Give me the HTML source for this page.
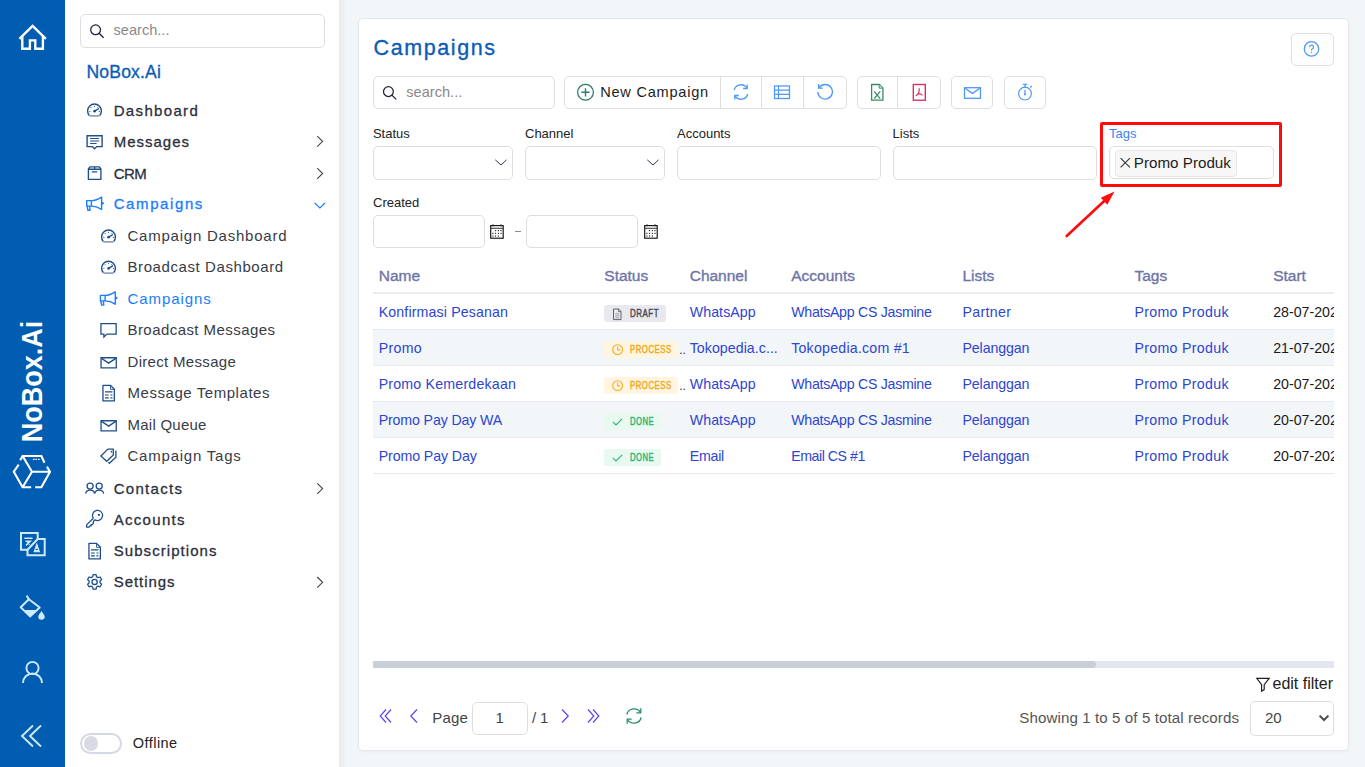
<!DOCTYPE html><html><head><meta charset="utf-8"><style>
*{margin:0;padding:0;box-sizing:border-box}
html,body{width:1365px;height:767px;overflow:hidden;background:#f3f6f9;font-family:"Liberation Sans",sans-serif}
.t{position:absolute;white-space:nowrap}
.b{position:absolute}
.s{position:absolute;overflow:visible}
</style></head><body>
<div class="b" style="left:0px;top:0px;width:65px;height:767px;background:#005db1"></div>
<svg class="s" style="left:0px;top:0px;" width="65" height="60" viewBox="0 0 65 60" fill="none"><path d="M19.4 38.8 L32.6 25.8 L45.9 38.8" stroke="#fff" stroke-width="2.35"/><path d="M22.3 35.5 V48.7 H29.9 V40.3 H35.3 V48.7 H42.9 V35.5" stroke="#fff" stroke-width="2.35"/></svg>
<div class="t" style="left:0;top:0;font-size:30px;line-height:30px;color:#fff;font-weight:700;transform:translate(31.8px,381.5px) translate(-50%,-50%) rotate(-90deg) scaleX(0.9);">NoBox.Ai</div>
<svg class="s" style="left:0px;top:440px;" width="65" height="60" viewBox="0 0 65 60" fill="none"><g stroke="#fff" stroke-width="2.1" stroke-linejoin="miter"><path d="M18.7 24.6 L13.8 31.7 L22.6 47.3 L31.2 47.3"/><path d="M35.1 47.3 L41.4 47.3 L50 31.7 L46.9 26.6"/><path d="M20.2 20.2 L22.6 16 L41.4 16 L44.5 22.7"/><path d="M22.6 16 L32 31.7 L50 31.7 M32 31.7 L22.6 47.3"/></g><path d="M33 19.3 H40" stroke="#fff" stroke-width="1.3" stroke-dasharray="1.6 0.9"/></svg>
<svg class="s" style="left:0px;top:520px;" width="65" height="45" viewBox="0 0 65 45" fill="none"><path d="M21 13 H37.7 V19 H44.7 V35.3 H27.5 V29.7 H21 Z M37.7 19 L27.5 29.7" stroke="#cfe9ff" stroke-width="2" stroke-linejoin="miter"/><path d="M24.3 18.3 H32.6 M25.5 21.3 H30.3 L26 25.4 M27.2 21.5 L29.6 24.6" stroke="#cfe9ff" stroke-width="1.5"/><path d="M33.4 32.3 L36.8 22.5 L40.2 32.3 Z" fill="#cfe9ff"/><path d="M35.6 29.4 H38" stroke="#005db1" stroke-width="1"/></svg>
<svg class="s" style="left:0px;top:590px;" width="65" height="35" viewBox="0 0 65 35" fill="none"><path d="M26.6 5.6 L28.9 9.2" stroke="#cfe9ff" stroke-width="2"/><path d="M28.9 9.3 L39.7 17.5 L30 26.4 L20.7 17.3 Z" stroke="#cfe9ff" stroke-width="2" stroke-linejoin="round"/><path d="M23.4 20 H37.1 L30 26.4 Z" fill="#cfe9ff"/><path d="M41.5 21.1 C40.3 23.3 38.3 25.1 38.3 26.6 A3.2 3.2 0 0 0 44.7 26.6 C44.7 25.1 42.7 23.3 41.5 21.1 Z" fill="#cfe9ff"/></svg>
<svg class="s" style="left:0px;top:650px;" width="65" height="40" viewBox="0 0 65 40" fill="none"><circle cx="32.5" cy="18" r="6.1" stroke="#cfe9ff" stroke-width="1.9"/><path d="M23 33 A9.5 9.5 0 0 1 42 33" stroke="#cfe9ff" stroke-width="1.9"/></svg>
<svg class="s" style="left:0px;top:715px;" width="65" height="40" viewBox="0 0 65 40" fill="none"><path d="M33 10.5 L22 21 L33 31.5 M41 10.5 L30 21 L41 31.5" stroke="#cfe9ff" stroke-width="1.9"/></svg>
<div class="b" style="left:65px;top:0px;width:274px;height:767px;background:#fff"></div>
<div class="b" style="left:339px;top:0px;width:8px;height:767px;background:linear-gradient(90deg,rgba(0,0,0,0.045),rgba(0,0,0,0))"></div>
<div class="b" style="left:80px;top:14px;width:245px;height:34px;border:1px solid #dedede;border-radius:5px;background:#fff"></div>
<svg class="s" style="left:80px;top:14px;" width="40" height="34" viewBox="0 0 40 34" fill="none"><circle cx="15.6" cy="15.8" r="4.9" stroke="#1c2038" stroke-width="1.25"/><path d="M19.1 19.3 L23.6 23.8" stroke="#1c2038" stroke-width="1.3"/></svg>
<div class="t" style="left:113.5px;top:22.70px;font-size:14.6px;line-height:14.6px;color:#8a8a8a;font-weight:400;letter-spacing:0px;">search...</div>
<div class="t" style="left:86.5px;top:64.20px;font-size:17.6px;line-height:17.6px;color:#0b5cb5;font-weight:400;letter-spacing:0.15px;-webkit-text-stroke:0.3px #0b5cb5">NoBox.Ai</div>
<div class="t" style="left:113.7px;top:102.50px;font-size:15px;line-height:15px;color:#2c2f3d;font-weight:400;letter-spacing:1.34px;-webkit-text-stroke:0.3px #2c2f3d">Dashboard</div>
<div class="t" style="left:113.7px;top:133.50px;font-size:15px;line-height:15px;color:#2c2f3d;font-weight:400;letter-spacing:0.99px;-webkit-text-stroke:0.3px #2c2f3d">Messages</div>
<div class="t" style="left:113.7px;top:165.50px;font-size:15px;line-height:15px;color:#2c2f3d;font-weight:400;letter-spacing:-0.5px;-webkit-text-stroke:0.3px #2c2f3d">CRM</div>
<div class="t" style="left:113.7px;top:196.10px;font-size:15px;line-height:15px;color:#1a7cff;font-weight:400;letter-spacing:1.6px;-webkit-text-stroke:0.3px #1a7cff">Campaigns</div>
<div class="t" style="left:127.5px;top:228.00px;font-size:15px;line-height:15px;color:#383b48;font-weight:400;letter-spacing:0.769px;">Campaign Dashboard</div>
<div class="t" style="left:127.5px;top:259.00px;font-size:15px;line-height:15px;color:#383b48;font-weight:400;letter-spacing:0.584px;">Broadcast Dashboard</div>
<div class="t" style="left:127.5px;top:290.50px;font-size:15px;line-height:15px;color:#1a7cff;font-weight:400;letter-spacing:0.929px;">Campaigns</div>
<div class="t" style="left:127.5px;top:321.50px;font-size:15px;line-height:15px;color:#383b48;font-weight:400;letter-spacing:0.437px;">Broadcast Messages</div>
<div class="t" style="left:127.5px;top:354.00px;font-size:15px;line-height:15px;color:#383b48;font-weight:400;letter-spacing:0.315px;">Direct Message</div>
<div class="t" style="left:127.5px;top:385.00px;font-size:15px;line-height:15px;color:#383b48;font-weight:400;letter-spacing:0.555px;">Message Templates</div>
<div class="t" style="left:127.5px;top:417.00px;font-size:15px;line-height:15px;color:#383b48;font-weight:400;letter-spacing:0.243px;">Mail Queue</div>
<div class="t" style="left:127.5px;top:447.50px;font-size:15px;line-height:15px;color:#383b48;font-weight:400;letter-spacing:0.779px;">Campaign Tags</div>
<div class="t" style="left:113.7px;top:480.50px;font-size:15px;line-height:15px;color:#2c2f3d;font-weight:400;letter-spacing:1.301px;-webkit-text-stroke:0.3px #2c2f3d">Contacts</div>
<div class="t" style="left:113.7px;top:511.60px;font-size:15px;line-height:15px;color:#2c2f3d;font-weight:400;letter-spacing:1.301px;-webkit-text-stroke:0.3px #2c2f3d">Accounts</div>
<div class="t" style="left:113.7px;top:543.40px;font-size:15px;line-height:15px;color:#2c2f3d;font-weight:400;letter-spacing:1.063px;-webkit-text-stroke:0.3px #2c2f3d">Subscriptions</div>
<div class="t" style="left:113.7px;top:574.30px;font-size:15px;line-height:15px;color:#2c2f3d;font-weight:400;letter-spacing:0.944px;-webkit-text-stroke:0.3px #2c2f3d">Settings</div>
<svg class="s" style="left:0;top:0" width="1365" height="767" viewBox="0 0 1365 767" fill="none"><g transform="translate(0 0)"><path d="M89.4 115.6 A6.9 6.9 0 1 1 99.6 115.6" stroke="#1f4f8a" stroke-width="1.4"/><path d="M89.6 115.9 H99.4" stroke="#6f80a0" stroke-width="1.3"/><path d="M94.6 111.2 L99 108.5" stroke="#1f4f8a" stroke-width="1.4"/><circle cx="94.6" cy="111.2" r="1.35" fill="#1f4f8a"/><g fill="#1f4f8a"><circle cx="89.9" cy="111.3" r="0.6"/><circle cx="99.4" cy="111.3" r="0.6"/><circle cx="94.5" cy="106.3" r="0.6"/><circle cx="91.1" cy="107.6" r="0.55"/><circle cx="97.9" cy="107.2" r="0.5"/></g></g><g transform="translate(14 126)"><path d="M89.4 115.6 A6.9 6.9 0 1 1 99.6 115.6" stroke="#1f4f8a" stroke-width="1.4"/><path d="M89.6 115.9 H99.4" stroke="#6f80a0" stroke-width="1.3"/><path d="M94.6 111.2 L99 108.5" stroke="#1f4f8a" stroke-width="1.4"/><circle cx="94.6" cy="111.2" r="1.35" fill="#1f4f8a"/><g fill="#1f4f8a"><circle cx="89.9" cy="111.3" r="0.6"/><circle cx="99.4" cy="111.3" r="0.6"/><circle cx="94.5" cy="106.3" r="0.6"/><circle cx="91.1" cy="107.6" r="0.55"/><circle cx="97.9" cy="107.2" r="0.5"/></g></g><g transform="translate(14 157.2)"><path d="M89.4 115.6 A6.9 6.9 0 1 1 99.6 115.6" stroke="#1f4f8a" stroke-width="1.4"/><path d="M89.6 115.9 H99.4" stroke="#6f80a0" stroke-width="1.3"/><path d="M94.6 111.2 L99 108.5" stroke="#1f4f8a" stroke-width="1.4"/><circle cx="94.6" cy="111.2" r="1.35" fill="#1f4f8a"/><g fill="#1f4f8a"><circle cx="89.9" cy="111.3" r="0.6"/><circle cx="99.4" cy="111.3" r="0.6"/><circle cx="94.5" cy="106.3" r="0.6"/><circle cx="91.1" cy="107.6" r="0.55"/><circle cx="97.9" cy="107.2" r="0.5"/></g></g><g stroke="#1f4f8a"><path d="M87.1 135.7 H102.1 V146.6 H96.7 L94.5 148.8 L92.3 146.6 H87.1 Z" stroke-width="1.4"/><path d="M90.1 138.5 H99.1 M90.1 141 H99.1 M90.1 143.5 H96.6" stroke-width="1.2"/></g><g stroke="#1f4f8a" stroke-width="1.35" stroke-linejoin="round"><path d="M88.4 179.4 V169 L89.9 166.9 H99.3 L100.9 169 V179.4 Z"/><path d="M88.4 169.2 H100.9 M94.6 166.9 V169.2 M91.8 171.8 H97.2"/></g><g transform="translate(0 0)" stroke="#1a7cff" stroke-width="1.4" stroke-linejoin="round"><path d="M86.7 200.6 H91.4 V206.1 H86.7 Z"/><path d="M91.4 200.6 C94.6 200.6 98 199.4 101.6 197.1 V209.4 C98 207.1 94.6 206.1 91.4 206.1"/><path d="M87.1 206.2 L87.9 210.3 H90.1 L89.6 206.2"/><circle cx="102.6" cy="203.25" r="1.2" fill="#1a7cff" stroke="none"/></g><g transform="translate(13.7 94.8)" stroke="#1a7cff" stroke-width="1.4" stroke-linejoin="round"><path d="M86.7 200.6 H91.4 V206.1 H86.7 Z"/><path d="M91.4 200.6 C94.6 200.6 98 199.4 101.6 197.1 V209.4 C98 207.1 94.6 206.1 91.4 206.1"/><path d="M87.1 206.2 L87.9 210.3 H90.1 L89.6 206.2"/><circle cx="102.6" cy="203.25" r="1.2" fill="#1a7cff" stroke="none"/></g><path d="M100.95 323.65 H116.15 V334.05 H107 L103.9 337 V334.05 H100.95 Z" stroke="#1f4f8a" stroke-width="1.3" stroke-linejoin="miter"/><g transform="translate(0 0)" stroke="#1f4f8a" stroke-width="1.3"><path d="M101.05 357.75 H116.25 V367.85 H101.05 Z"/><path d="M101.2 358.1 L108.65 363.1 L116.1 358.1"/></g><g transform="translate(0 0)" stroke="#1f4f8a"><path d="M102.95 385.35 H110.6 L114.35 389.2 V400.95 H102.95 Z" stroke-width="1.3" stroke-linejoin="round"/><path d="M110.5 385.6 V389.3 H114.2" stroke-width="0.9"/><path d="M105 391.9 H112.5 M105 395 H108.8 M110.4 395 H112.5 M105 397.9 H108.8 M110.4 397.9 H112.5" stroke-width="1.1"/></g><g transform="translate(0 63)" stroke="#1f4f8a" stroke-width="1.3"><path d="M101.05 357.75 H116.25 V367.85 H101.05 Z"/><path d="M101.2 358.1 L108.65 363.1 L116.1 358.1"/></g><g stroke="#1f4f8a" stroke-width="1.3" stroke-linejoin="miter"><path d="M100.9 456 L107.9 449.1 H113.3 V455 L106.7 461.3 Z"/><path d="M115.9 450.6 V457.2 L109.4 463.3 L108.4 462.3"/></g><circle cx="111.4" cy="451.7" r="0.85" fill="#1f4f8a"/><g stroke="#1f4f8a" stroke-width="1.3"><circle cx="90.1" cy="486.1" r="3.05"/><circle cx="99.2" cy="486.1" r="3.05"/><path d="M85.6 493.6 A4.6 4.3 0 0 1 94.65 493.6 A4.6 4.3 0 0 1 103.7 493.6"/></g><g stroke="#1f4f8a" stroke-width="1.3" stroke-linejoin="round"><path d="M93.3 518.3 A5.1 5.1 0 1 1 94.7 519.7"/><path d="M93.3 518.3 L86.6 524.9 V527.1 H89.1 L89.9 525.9 H91.1 V524.7 H92.3 L93.3 523.4 V521.9 L94.7 519.7"/></g><circle cx="98.9" cy="514.9" r="1.1" fill="#1f4f8a"/><g transform="translate(-14 158)" stroke="#1f4f8a"><path d="M102.95 385.35 H110.6 L114.35 389.2 V400.95 H102.95 Z" stroke-width="1.3" stroke-linejoin="round"/><path d="M110.5 385.6 V389.3 H114.2" stroke-width="0.9"/><path d="M105 391.9 H112.5 M105 395 H108.8 M110.4 395 H112.5 M105 397.9 H108.8 M110.4 397.9 H112.5" stroke-width="1.1"/></g><g stroke="#1f4f8a" stroke-width="1.3" stroke-linejoin="round"><path d="M92.66 576.75 L93.13 574.65 L96.07 574.65 L96.54 576.75 L98.09 577.65 L100.15 577.00 L101.62 579.55 L100.03 581.00 L100.03 582.80 L101.62 584.25 L100.15 586.80 L98.09 586.15 L96.54 587.05 L96.07 589.15 L93.13 589.15 L92.66 587.05 L91.11 586.15 L89.05 586.80 L87.58 584.25 L89.17 582.80 L89.17 581.00 L87.58 579.55 L89.05 577.00 L91.11 577.65 Z"/><circle cx="94.6" cy="581.9" r="2.6"/></g><path d="M317.2 136.05 L322.6 141.35 L317.2 146.65" stroke="#444" stroke-width="1.1"/><path d="M317.2 168.20 L322.6 173.50 L317.2 178.80" stroke="#444" stroke-width="1.1"/><path d="M317.2 483.30 L322.6 488.60 L317.2 493.90" stroke="#444" stroke-width="1.1"/><path d="M317.2 577.00 L322.6 582.30 L317.2 587.60" stroke="#444" stroke-width="1.1"/><path d="M314.8 203 L319.9 208 L325 203" stroke="#1a7cff" stroke-width="1.1"/></svg>
<div class="b" style="left:80px;top:733px;width:42px;height:21px;border:2px solid #d5d9e3;border-radius:10.5px;background:#fff"></div>
<div class="b" style="left:83.5px;top:736.3px;width:14.5px;height:14.5px;border-radius:50%;background:#d8dbe4"></div>
<div class="t" style="left:132.8px;top:735.75px;font-size:14.5px;line-height:14.5px;color:#222;font-weight:400;letter-spacing:0.45px;">Offline</div>
<div class="b" style="left:358px;top:18px;width:991px;height:733px;background:#fff;border:1px solid #e4e7eb;border-radius:5px;box-shadow:0 1px 3px rgba(0,0,0,0.04)"></div>
<div class="t" style="left:373.5px;top:38.25px;font-size:21.5px;line-height:21.5px;color:#0b5cb5;font-weight:400;letter-spacing:1.6px;-webkit-text-stroke:0.35px #0b5cb5">Campaigns</div>
<div class="b" style="left:1291px;top:33px;width:43px;height:33px;border:1px solid #e0e0e0;border-radius:5px"></div>
<svg class="s" style="left:1301px;top:39px;" width="21" height="21" viewBox="0 0 21 21" fill="none"><circle cx="10.5" cy="9.9" r="7.2" stroke="#5097fa" stroke-width="1.25"/><path d="M8.7 8.2 A1.9 1.9 0 1 1 11.1 9.9 C10.6 10.2 10.5 10.6 10.5 11.4" stroke="#5097fa" stroke-width="1.2"/><circle cx="10.5" cy="13.3" r="0.8" fill="#5097fa"/></svg>
<div class="b" style="left:373px;top:76px;width:182px;height:33px;border:1px solid #dedede;border-radius:5px"></div>
<svg class="s" style="left:373px;top:76px;" width="40" height="33" viewBox="0 0 40 33" fill="none"><circle cx="15.4" cy="15.6" r="4.9" stroke="#1c2038" stroke-width="1.25"/><path d="M18.9 19.1 L23.2 23.4" stroke="#1c2038" stroke-width="1.3"/></svg>
<div class="t" style="left:406.3px;top:84.90px;font-size:14.6px;line-height:14.6px;color:#8a8a8a;font-weight:400;letter-spacing:0px;">search...</div>
<div class="b" style="left:564px;top:76px;width:283px;height:33px;border:1px solid #dedede;border-radius:5px"></div>
<div class="b" style="left:719.5px;top:77px;width:1px;height:31px;background:#dedede"></div>
<div class="b" style="left:761px;top:77px;width:1px;height:31px;background:#dedede"></div>
<div class="b" style="left:803px;top:77px;width:1px;height:31px;background:#dedede"></div>
<svg class="s" style="left:574px;top:82px;" width="22" height="22" viewBox="0 0 22 22" fill="none"><circle cx="11.5" cy="10.3" r="7.9" stroke="#2a7d68" stroke-width="1.25"/><path d="M11.5 6.2 V14.4 M7.4 10.3 H15.6" stroke="#2a7d68" stroke-width="1.4"/></svg>
<div class="t" style="left:600.2px;top:84.70px;font-size:14.6px;line-height:14.6px;color:#1d1d1d;font-weight:400;letter-spacing:0.75px;">New Campaign</div>
<svg class="s" style="left:730px;top:81px;" width="22" height="22" viewBox="0 0 22 22" fill="none"><path d="M4.2 9 A7 7 0 0 1 17 7.2 M17.8 13 A7 7 0 0 1 5 14.8" stroke="#5097fa" stroke-width="1.3"/><path d="M17.2 3.5 V7.5 H13.2 M4.8 18.5 V14.5 H8.8" stroke="#5097fa" stroke-width="1.3"/></svg>
<svg class="s" style="left:771px;top:81px;" width="22" height="22" viewBox="0 0 22 22" fill="none"><rect x="3.5" y="5" width="15" height="12.5" stroke="#5097fa" stroke-width="1.3"/><path d="M3.5 9.2 H18.5 M3.5 13.3 H18.5 M7.5 5 V17.5" stroke="#5097fa" stroke-width="1.25"/></svg>
<svg class="s" style="left:814px;top:81px;" width="22" height="22" viewBox="0 0 22 22" fill="none"><path d="M5.2 6.5 A7.3 7.3 0 1 1 3.8 11" stroke="#5097fa" stroke-width="1.3"/><path d="M4.6 3 V7.2 H8.8" stroke="#5097fa" stroke-width="1.3"/></svg>
<div class="b" style="left:856.5px;top:76px;width:84px;height:33px;border:1px solid #dedede;border-radius:5px"></div>
<div class="b" style="left:897px;top:77px;width:1px;height:31px;background:#dedede"></div>
<svg class="s" style="left:866px;top:81px;" width="22" height="22" viewBox="0 0 22 22" fill="none"><path d="M5.6 3.5 H13.4 L16.9 7 V19.2 H5.6 Z" stroke="#3a8a66" stroke-width="1.3" stroke-linejoin="round"/><path d="M13.2 3.6 V7.2 H16.8" stroke="#3a8a66" stroke-width="0.9" fill="#cfe6da"/><path d="M8.2 10.3 L14.2 17.6 M14.2 10.3 L8.2 17.6" stroke="#3a8a66" stroke-width="1.3"/></svg>
<svg class="s" style="left:908px;top:81px;" width="22" height="22" viewBox="0 0 22 22" fill="none"><rect x="5.3" y="3.5" width="12" height="15.7" stroke="#dc2a5e" stroke-width="1.35"/><path d="M11.3 7.3 C11.3 9.5 11 11 10.4 12.3 C9.6 13.6 8.6 14.3 7.8 14.8 M11.2 12.4 C12.3 13.3 13.4 13.8 14.6 14.2 M9.6 13.2 C10.8 12.8 12.2 12.8 13.6 13.4" stroke="#dc2a5e" stroke-width="1.2"/></svg>
<div class="b" style="left:951px;top:76px;width:42px;height:33px;border:1px solid #dedede;border-radius:5px"></div>
<svg class="s" style="left:961px;top:81px;" width="22" height="22" viewBox="0 0 22 22" fill="none"><rect x="3.5" y="6.7" width="16" height="10.6" stroke="#5097fa" stroke-width="1.3"/><path d="M3.8 7 L11.5 12.4 L19.2 7" stroke="#5097fa" stroke-width="1.3"/></svg>
<div class="b" style="left:1004px;top:76px;width:42px;height:33px;border:1px solid #dedede;border-radius:5px"></div>
<svg class="s" style="left:1014px;top:81px;" width="22" height="22" viewBox="0 0 22 22" fill="none"><circle cx="11" cy="12.6" r="6.4" stroke="#5097fa" stroke-width="1.2"/><path d="M8.8 3.3 H13.2 M11 3.3 V6.2 M16.2 6.6 L17.8 5" stroke="#5097fa" stroke-width="1.3"/><path d="M11 9 V13.6" stroke="#5097fa" stroke-width="1.3"/><path d="M9.6 12.6 L11 15 L12.4 12.6 Z" fill="#5097fa"/></svg>
<div class="t" style="left:372.9px;top:127.40px;font-size:13px;line-height:13px;color:#222;font-weight:400;letter-spacing:0px;">Status</div>
<div class="t" style="left:525px;top:127.40px;font-size:13px;line-height:13px;color:#222;font-weight:400;letter-spacing:0px;">Channel</div>
<div class="t" style="left:677px;top:127.40px;font-size:13px;line-height:13px;color:#222;font-weight:400;letter-spacing:0px;">Accounts</div>
<div class="t" style="left:892.6px;top:127.40px;font-size:13px;line-height:13px;color:#222;font-weight:400;letter-spacing:0px;">Lists</div>
<div class="t" style="left:1109px;top:127.40px;font-size:13px;line-height:13px;color:#3b82f6;font-weight:400;letter-spacing:0px;">Tags</div>
<div class="b" style="left:373px;top:146px;width:140px;height:34px;border:1px solid #dedede;border-radius:5px;background:#fff"></div>
<div class="b" style="left:525px;top:146px;width:140px;height:34px;border:1px solid #dedede;border-radius:5px;background:#fff"></div>
<svg class="s" style="left:490px;top:153px;" width="20" height="20" viewBox="0 0 20 20" fill="none"><path d="M5.3 6.9 L11 11.9 L16.5 6.9" stroke="#2c3150" stroke-width="1.0"/></svg>
<svg class="s" style="left:642px;top:153px;" width="20" height="20" viewBox="0 0 20 20" fill="none"><path d="M5.3 6.9 L11 11.9 L16.5 6.9" stroke="#2c3150" stroke-width="1.0"/></svg>
<div class="b" style="left:677px;top:146px;width:204px;height:34px;border:1px solid #dedede;border-radius:5px;background:#fff"></div>
<div class="b" style="left:892.5px;top:146px;width:204px;height:34px;border:1px solid #dedede;border-radius:5px;background:#fff"></div>
<div class="b" style="left:1109px;top:146px;width:164.5px;height:33px;border:1px solid #dedede;border-radius:5px;background:#fff"></div>
<div class="b" style="left:1115px;top:149.5px;width:121.5px;height:27px;background:#f7f7f7;border:1px solid #e6e6e6;border-radius:4px"></div>
<svg class="s" style="left:1117px;top:153px;" width="16" height="20" viewBox="0 0 16 20" fill="none"><path d="M3.6 5.1 L12.9 14.4 M12.9 5.1 L3.6 14.4" stroke="#333" stroke-width="1.05"/></svg>
<div class="t" style="left:1133.8px;top:155.30px;font-size:15.2px;line-height:15.2px;color:#1d1d1d;font-weight:400;letter-spacing:0px;">Promo Produk</div>
<div class="b" style="left:1100px;top:122px;width:182px;height:65px;border:3px solid #ff0b0b;border-radius:2px"></div>
<svg class="s" style="left:1060px;top:185px;" width="60" height="55" viewBox="0 0 60 55" fill="none"><path d="M6.7 51 L45 15.3" stroke="#ff0b0b" stroke-width="2.6" stroke-linecap="round"/><path d="M54.5 6.5 L47.3 19.8 L40.8 12.7 Z" fill="#ff0b0b"/></svg>
<div class="t" style="left:373px;top:196.40px;font-size:13px;line-height:13px;color:#222;font-weight:400;letter-spacing:0px;">Created</div>
<div class="b" style="left:373px;top:215px;width:112px;height:33px;border:1px solid #dedede;border-radius:5px;background:#fff"></div>
<div class="b" style="left:526.4px;top:215px;width:112px;height:33px;border:1px solid #dedede;border-radius:5px;background:#fff"></div>
<svg class="s" style="left:486px;top:220px;" width="22" height="22" viewBox="0 0 22 22" fill="none"><rect x="4.7" y="5.6" width="12.5" height="12.6" stroke="#111" stroke-width="1.15"/><path d="M4.7 8.3 H17.2" stroke="#444" stroke-width="1.1"/><path d="M7 4.2 V6.4 M15 4.2 V6.4" stroke="#333" stroke-width="1"/><rect x="8.9" y="10.0" width="1.2" height="1.2" fill="#333"/><rect x="11.8" y="10.0" width="1.2" height="1.2" fill="#333"/><rect x="14.4" y="10.0" width="1.2" height="1.2" fill="#333"/><rect x="6.3" y="12.8" width="1.2" height="1.2" fill="#333"/><rect x="8.9" y="12.8" width="1.2" height="1.2" fill="#333"/><rect x="11.8" y="12.8" width="1.2" height="1.2" fill="#333"/><rect x="14.4" y="12.8" width="1.2" height="1.2" fill="#333"/><rect x="6.3" y="15.4" width="1.2" height="1.2" fill="#333"/><rect x="8.9" y="15.4" width="1.2" height="1.2" fill="#333"/><rect x="11.8" y="15.4" width="1.2" height="1.2" fill="#333"/></svg>
<svg class="s" style="left:640px;top:220px;" width="22" height="22" viewBox="0 0 22 22" fill="none"><rect x="4.7" y="5.6" width="12.5" height="12.6" stroke="#111" stroke-width="1.15"/><path d="M4.7 8.3 H17.2" stroke="#444" stroke-width="1.1"/><path d="M7 4.2 V6.4 M15 4.2 V6.4" stroke="#333" stroke-width="1"/><rect x="8.9" y="10.0" width="1.2" height="1.2" fill="#333"/><rect x="11.8" y="10.0" width="1.2" height="1.2" fill="#333"/><rect x="14.4" y="10.0" width="1.2" height="1.2" fill="#333"/><rect x="6.3" y="12.8" width="1.2" height="1.2" fill="#333"/><rect x="8.9" y="12.8" width="1.2" height="1.2" fill="#333"/><rect x="11.8" y="12.8" width="1.2" height="1.2" fill="#333"/><rect x="14.4" y="12.8" width="1.2" height="1.2" fill="#333"/><rect x="6.3" y="15.4" width="1.2" height="1.2" fill="#333"/><rect x="8.9" y="15.4" width="1.2" height="1.2" fill="#333"/><rect x="11.8" y="15.4" width="1.2" height="1.2" fill="#333"/></svg>
<div class="b" style="left:515px;top:231.3px;width:5.5px;height:1.2px;background:#8a8a8a"></div>
<div class="t" style="left:378.7px;top:267.75px;font-size:15.5px;line-height:15.5px;color:#6d75a6;font-weight:400;letter-spacing:0px;-webkit-text-stroke:0.35px #6d75a6">Name</div>
<div class="t" style="left:604.3px;top:267.75px;font-size:15.5px;line-height:15.5px;color:#6d75a6;font-weight:400;letter-spacing:0px;-webkit-text-stroke:0.35px #6d75a6">Status</div>
<div class="t" style="left:689.7px;top:267.75px;font-size:15.5px;line-height:15.5px;color:#6d75a6;font-weight:400;letter-spacing:0px;-webkit-text-stroke:0.35px #6d75a6">Channel</div>
<div class="t" style="left:791.2px;top:267.75px;font-size:15.5px;line-height:15.5px;color:#6d75a6;font-weight:400;letter-spacing:0px;-webkit-text-stroke:0.35px #6d75a6">Accounts</div>
<div class="t" style="left:962.5px;top:267.75px;font-size:15.5px;line-height:15.5px;color:#6d75a6;font-weight:400;letter-spacing:0px;-webkit-text-stroke:0.35px #6d75a6">Lists</div>
<div class="t" style="left:1134.5px;top:267.75px;font-size:15.5px;line-height:15.5px;color:#6d75a6;font-weight:400;letter-spacing:0px;-webkit-text-stroke:0.35px #6d75a6">Tags</div>
<div class="t" style="left:1273.2px;top:267.75px;font-size:15.5px;line-height:15.5px;color:#6d75a6;font-weight:400;letter-spacing:0px;-webkit-text-stroke:0.35px #6d75a6">Start</div>
<div class="b" style="left:373px;top:292px;width:961px;height:2px;background:#e9ecf0"></div>
<div class="b" style="left:373px;top:294px;width:961px;height:180px;overflow:hidden">
<div class="b" style="left:0;top:0px;width:961px;height:36px;background:#fff;border-bottom:1px solid #e6e9ee"></div>
<div class="t" style="left:5.699999999999989px;top:10.90px;font-size:14.2px;line-height:14.2px;color:#2d45d0;font-weight:400;letter-spacing:0.137px;">Konfirmasi Pesanan</div>
<div class="t" style="left:316.70000000000005px;top:10.90px;font-size:14.2px;line-height:14.2px;color:#2d45d0;font-weight:400;letter-spacing:0.085px;">WhatsApp</div>
<div class="t" style="left:418.20000000000005px;top:10.90px;font-size:14.2px;line-height:14.2px;color:#2d45d0;font-weight:400;letter-spacing:-0.289px;">WhatsApp CS Jasmine</div>
<div class="t" style="left:589.5px;top:10.90px;font-size:14.2px;line-height:14.2px;color:#2d45d0;font-weight:400;letter-spacing:0.323px;">Partner</div>
<div class="t" style="left:761.5px;top:10.90px;font-size:14.2px;line-height:14.2px;color:#2d45d0;font-weight:400;letter-spacing:0.3px;">Promo Produk</div>
<div class="t" style="left:900.2px;top:10.90px;font-size:14.2px;line-height:14.2px;color:#1a1a1a;font-weight:400;letter-spacing:0px;">28-07-202</div>
<div class="b" style="left:231.20000000000005px;top:11px;width:61.5px;height:17px;background:#e8e9ee;border-radius:3px"></div>
<svg class="s" style="left:239.20000000000005px;top:13.5px;" width="12" height="13" viewBox="0 0 12 13" fill="none"><path d="M1.5 1 H6.6 L9 3.4 V11.6 H1.5 Z" stroke="#505060" stroke-width="0.9" stroke-linejoin="round"/><path d="M6.4 1 V3.6 H9" stroke="#505060" stroke-width="0.7"/><path d="M3.3 5.8 H7.2 M3.3 7.8 H7.2 M3.3 9.8 H7.2" stroke="#6a6a78" stroke-width="0.6"/></svg>
<div class="t" style="left:256.90000000000003px;top:14.00px;font-size:10.6px;line-height:10.6px;color:#4b4b58;font-weight:400;letter-spacing:0.7px;transform:scaleX(0.75);transform-origin:0 0;-webkit-text-stroke:0.45px #4b4b58">DRAFT</div>
<div class="b" style="left:0;top:36px;width:961px;height:36px;background:#f3f6f9;border-bottom:1px solid #e6e9ee"></div>
<div class="t" style="left:5.699999999999989px;top:46.90px;font-size:14.2px;line-height:14.2px;color:#2d45d0;font-weight:400;letter-spacing:0.32px;">Promo</div>
<div class="t" style="left:316.70000000000005px;top:46.90px;font-size:14.2px;line-height:14.2px;color:#2d45d0;font-weight:400;letter-spacing:0.045px;">Tokopedia.c...</div>
<div class="t" style="left:418.20000000000005px;top:46.90px;font-size:14.2px;line-height:14.2px;color:#2d45d0;font-weight:400;letter-spacing:0.224px;">Tokopedia.com #1</div>
<div class="t" style="left:589.5px;top:46.90px;font-size:14.2px;line-height:14.2px;color:#2d45d0;font-weight:400;letter-spacing:-0.126px;">Pelanggan</div>
<div class="t" style="left:761.5px;top:46.90px;font-size:14.2px;line-height:14.2px;color:#2d45d0;font-weight:400;letter-spacing:0.3px;">Promo Produk</div>
<div class="t" style="left:900.2px;top:46.90px;font-size:14.2px;line-height:14.2px;color:#1a1a1a;font-weight:400;letter-spacing:0px;">21-07-202</div>
<div class="b" style="left:231.20000000000005px;top:47px;width:73.5px;height:17px;background:#fff5e1;border-radius:3px"></div>
<svg class="s" style="left:238.20000000000005px;top:49px;" width="13" height="13" viewBox="0 0 13 13" fill="none"><circle cx="6.6" cy="6.6" r="4.9" stroke="#f3ac22" stroke-width="1.1"/><path d="M6.6 3.4 V6.9 H9.2" stroke="#f3ac22" stroke-width="1.1"/></svg>
<div class="t" style="left:256.90000000000003px;top:50.00px;font-size:10.6px;line-height:10.6px;color:#f0a81c;font-weight:400;letter-spacing:0.7px;transform:scaleX(0.735);transform-origin:0 0;-webkit-text-stroke:0.45px #f0a81c">PROCESS</div>
<div class="t" style="left:306.20000000000005px;top:49.50px;font-size:12px;line-height:12px;color:#333;font-weight:400;letter-spacing:0px;">..</div>
<div class="b" style="left:0;top:72px;width:961px;height:36px;background:#fff;border-bottom:1px solid #e6e9ee"></div>
<div class="t" style="left:5.699999999999989px;top:82.90px;font-size:14.2px;line-height:14.2px;color:#2d45d0;font-weight:400;letter-spacing:0.195px;">Promo Kemerdekaan</div>
<div class="t" style="left:316.70000000000005px;top:82.90px;font-size:14.2px;line-height:14.2px;color:#2d45d0;font-weight:400;letter-spacing:0.085px;">WhatsApp</div>
<div class="t" style="left:418.20000000000005px;top:82.90px;font-size:14.2px;line-height:14.2px;color:#2d45d0;font-weight:400;letter-spacing:-0.289px;">WhatsApp CS Jasmine</div>
<div class="t" style="left:589.5px;top:82.90px;font-size:14.2px;line-height:14.2px;color:#2d45d0;font-weight:400;letter-spacing:-0.126px;">Pelanggan</div>
<div class="t" style="left:761.5px;top:82.90px;font-size:14.2px;line-height:14.2px;color:#2d45d0;font-weight:400;letter-spacing:0.3px;">Promo Produk</div>
<div class="t" style="left:900.2px;top:82.90px;font-size:14.2px;line-height:14.2px;color:#1a1a1a;font-weight:400;letter-spacing:0px;">20-07-202</div>
<div class="b" style="left:231.20000000000005px;top:83px;width:73.5px;height:17px;background:#fff5e1;border-radius:3px"></div>
<svg class="s" style="left:238.20000000000005px;top:85px;" width="13" height="13" viewBox="0 0 13 13" fill="none"><circle cx="6.6" cy="6.6" r="4.9" stroke="#f3ac22" stroke-width="1.1"/><path d="M6.6 3.4 V6.9 H9.2" stroke="#f3ac22" stroke-width="1.1"/></svg>
<div class="t" style="left:256.90000000000003px;top:86.00px;font-size:10.6px;line-height:10.6px;color:#f0a81c;font-weight:400;letter-spacing:0.7px;transform:scaleX(0.735);transform-origin:0 0;-webkit-text-stroke:0.45px #f0a81c">PROCESS</div>
<div class="t" style="left:306.20000000000005px;top:85.50px;font-size:12px;line-height:12px;color:#333;font-weight:400;letter-spacing:0px;">..</div>
<div class="b" style="left:0;top:108px;width:961px;height:36px;background:#f3f6f9;border-bottom:1px solid #e6e9ee"></div>
<div class="t" style="left:5.699999999999989px;top:118.90px;font-size:14.2px;line-height:14.2px;color:#2d45d0;font-weight:400;letter-spacing:-0.135px;">Promo Pay Day WA</div>
<div class="t" style="left:316.70000000000005px;top:118.90px;font-size:14.2px;line-height:14.2px;color:#2d45d0;font-weight:400;letter-spacing:0.085px;">WhatsApp</div>
<div class="t" style="left:418.20000000000005px;top:118.90px;font-size:14.2px;line-height:14.2px;color:#2d45d0;font-weight:400;letter-spacing:-0.289px;">WhatsApp CS Jasmine</div>
<div class="t" style="left:589.5px;top:118.90px;font-size:14.2px;line-height:14.2px;color:#2d45d0;font-weight:400;letter-spacing:-0.126px;">Pelanggan</div>
<div class="t" style="left:761.5px;top:118.90px;font-size:14.2px;line-height:14.2px;color:#2d45d0;font-weight:400;letter-spacing:0.3px;">Promo Produk</div>
<div class="t" style="left:900.2px;top:118.90px;font-size:14.2px;line-height:14.2px;color:#1a1a1a;font-weight:400;letter-spacing:0px;">20-07-202</div>
<div class="b" style="left:231.20000000000005px;top:119px;width:56.5px;height:17px;background:#e8f9f0;border-radius:3px"></div>
<svg class="s" style="left:238.20000000000005px;top:121px;" width="13" height="13" viewBox="0 0 13 13" fill="none"><path d="M1.8 6.8 L5 10 L11.2 3.8" stroke="#2cb57a" stroke-width="1.1"/></svg>
<div class="t" style="left:256.90000000000003px;top:122.00px;font-size:10.6px;line-height:10.6px;color:#2cb57a;font-weight:400;letter-spacing:0.7px;transform:scaleX(0.72);transform-origin:0 0;-webkit-text-stroke:0.45px #2cb57a">DONE</div>
<div class="b" style="left:0;top:144px;width:961px;height:36px;background:#fff;border-bottom:1px solid #e6e9ee"></div>
<div class="t" style="left:5.699999999999989px;top:154.90px;font-size:14.2px;line-height:14.2px;color:#2d45d0;font-weight:400;letter-spacing:-0.102px;">Promo Pay Day</div>
<div class="t" style="left:316.70000000000005px;top:154.90px;font-size:14.2px;line-height:14.2px;color:#2d45d0;font-weight:400;letter-spacing:-0.229px;">Email</div>
<div class="t" style="left:418.20000000000005px;top:154.90px;font-size:14.2px;line-height:14.2px;color:#2d45d0;font-weight:400;letter-spacing:-0.462px;">Email CS #1</div>
<div class="t" style="left:589.5px;top:154.90px;font-size:14.2px;line-height:14.2px;color:#2d45d0;font-weight:400;letter-spacing:-0.126px;">Pelanggan</div>
<div class="t" style="left:761.5px;top:154.90px;font-size:14.2px;line-height:14.2px;color:#2d45d0;font-weight:400;letter-spacing:0.3px;">Promo Produk</div>
<div class="t" style="left:900.2px;top:154.90px;font-size:14.2px;line-height:14.2px;color:#1a1a1a;font-weight:400;letter-spacing:0px;">20-07-202</div>
<div class="b" style="left:231.20000000000005px;top:155px;width:56.5px;height:17px;background:#e8f9f0;border-radius:3px"></div>
<svg class="s" style="left:238.20000000000005px;top:157px;" width="13" height="13" viewBox="0 0 13 13" fill="none"><path d="M1.8 6.8 L5 10 L11.2 3.8" stroke="#2cb57a" stroke-width="1.1"/></svg>
<div class="t" style="left:256.90000000000003px;top:158.00px;font-size:10.6px;line-height:10.6px;color:#2cb57a;font-weight:400;letter-spacing:0.7px;transform:scaleX(0.72);transform-origin:0 0;-webkit-text-stroke:0.45px #2cb57a">DONE</div>
</div>
<div class="b" style="left:373px;top:661px;width:961px;height:7px;background:#e2e7ef"></div>
<div class="b" style="left:373px;top:661px;width:723px;height:7px;background:#c8cfd9;border-radius:0 3.5px 3.5px 0"></div>
<svg class="s" style="left:1255px;top:676px;" width="16" height="16" viewBox="0 0 16 16" fill="none"><path d="M1.8 2.4 H14.2 L9.2 8.6 V13.6 L6.6 15.2 V8.6 Z" stroke="#1c1c2a" stroke-width="1.15" stroke-linejoin="miter"/></svg>
<div class="t" style="left:1272.5px;top:676.10px;font-size:16px;line-height:16px;color:#222;font-weight:400;letter-spacing:0px;">edit filter</div>
<svg class="s" style="left:375px;top:705px;" width="22" height="22" viewBox="0 0 22 22" fill="none"><path d="M11 4.5 L5.2 11 L11 17.5 M16 4.5 L10.2 11 L16 17.5" stroke="#6148ef" stroke-width="1.25"/></svg>
<svg class="s" style="left:402px;top:705px;" width="22" height="22" viewBox="0 0 22 22" fill="none"><path d="M15 4.5 L8.8 11 L15 17.5" stroke="#6148ef" stroke-width="1.25"/></svg>
<div class="t" style="left:432.3px;top:710.00px;font-size:15px;line-height:15px;color:#444;font-weight:400;letter-spacing:0.2px;">Page</div>
<div class="b" style="left:472px;top:702px;width:56px;height:33px;border:1px solid #dedede;border-radius:5px;background:#fff"></div>
<div class="t" style="left:495.5px;top:710.00px;font-size:15px;line-height:15px;color:#444;font-weight:400;letter-spacing:0px;">1</div>
<div class="t" style="left:532px;top:710.00px;font-size:15px;line-height:15px;color:#444;font-weight:400;letter-spacing:0px;">/</div>
<div class="t" style="left:540px;top:710.00px;font-size:15px;line-height:15px;color:#444;font-weight:400;letter-spacing:0px;">1</div>
<svg class="s" style="left:555px;top:705px;" width="22" height="22" viewBox="0 0 22 22" fill="none"><path d="M7 4.5 L13.2 11 L7 17.5" stroke="#6148ef" stroke-width="1.25"/></svg>
<svg class="s" style="left:582px;top:705px;" width="22" height="22" viewBox="0 0 22 22" fill="none"><path d="M6 4.5 L11.8 11 L6 17.5 M11 4.5 L16.8 11 L11 17.5" stroke="#6148ef" stroke-width="1.25"/></svg>
<svg class="s" style="left:623px;top:705px;" width="22" height="22" viewBox="0 0 22 22" fill="none"><path d="M3.8 9.5 A7.5 7.5 0 0 1 17.5 7.5 M18.2 12.5 A7.5 7.5 0 0 1 4.5 14.5" stroke="#2e8a6a" stroke-width="1.3"/><path d="M17.8 3.3 V7.8 H13.3 M4.2 18.7 V14.2 H8.7" stroke="#2e8a6a" stroke-width="1.3"/></svg>
<div class="t" style="left:1019.3px;top:709.95px;font-size:15.1px;line-height:15.1px;color:#555;font-weight:400;letter-spacing:0.1px;">Showing 1 to 5 of 5 total records</div>
<div class="b" style="left:1250px;top:701px;width:84px;height:35px;border:1px solid #dedede;border-radius:5px;background:#fff"></div>
<div class="t" style="left:1265px;top:710.00px;font-size:15px;line-height:15px;color:#444;font-weight:400;letter-spacing:0px;">20</div>
<svg class="s" style="left:1315px;top:709px;" width="18" height="18" viewBox="0 0 18 18" fill="none"><path d="M4.6 6.6 L9 11 L13.4 6.6" stroke="#4a4a4a" stroke-width="2"/></svg>
</body></html>
